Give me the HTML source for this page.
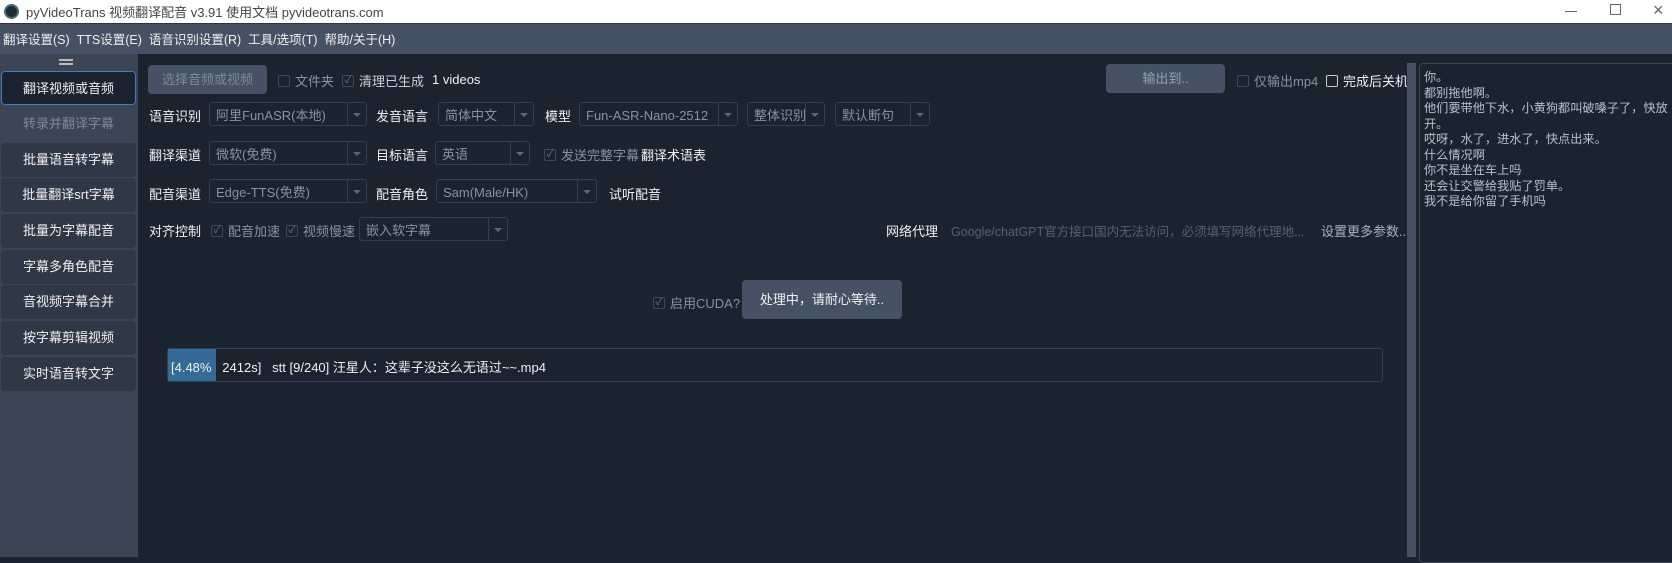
<!DOCTYPE html>
<html><head><meta charset="utf-8"><style>
*{box-sizing:border-box;margin:0;padding:0}
body{width:1672px;height:557px;overflow:hidden;background:#1b232e;font-family:"Liberation Sans","Noto Sans CJK SC",sans-serif;font-size:13px;color:#e8ecef;position:relative}
.a{position:absolute;white-space:nowrap}
#title{left:0;top:0;width:1672px;height:24px;background:#fff;color:#444;font-size:13px;border-bottom:1px solid #333}
#menu{left:0;top:24px;width:1672px;height:30px;background:#465263;color:#f0f0f0;font-size:12.5px}
#side{left:0;top:54px;width:138px;height:503px;background:#3b4553}
.sb{position:absolute;left:1px;width:135px;height:34px;background:#2f3945;border-radius:4px;color:#f0f0f0;text-align:center;line-height:34px;font-size:13px}
.lbl{position:absolute;color:#eef1f4;font-size:13px;white-space:nowrap}
.cb{position:absolute;height:24px;border:1px solid #333f4c;border-radius:3px;color:#8793a3;font-size:13px;line-height:22px;padding-left:6px;padding-top:2px;white-space:nowrap}
.cb:after{content:"";position:absolute;right:18px;top:0;bottom:0;border-left:1px solid #333f4c}
.cb:before{content:"";position:absolute;right:5px;top:10px;border:4px solid transparent;border-top:4px solid #5c6775}
.ck{position:absolute;color:#8793a3;font-size:13px;white-space:nowrap}
.ck i{display:inline-block;width:12px;height:12px;border:1px solid #3e4a58;border-radius:2px;margin-right:5px;vertical-align:middle;position:relative;top:-2px;font-style:normal;font-size:10px;line-height:10px;text-align:center;color:#6f7b8a}
.btn{position:absolute;background:#465263;border-radius:4px;color:#97a2b0;text-align:center;font-size:13px}
</style></head><body>
<div id="title" class="a">
<div class="a" style="left:4px;top:4px;width:15px;height:15px;border-radius:50%;background:#1e2b33;border:2px solid #4a6b7a"></div>
<div class="a" style="left:26px;top:2px">pyVideoTrans 视频翻译配音 v3.91 使用文档 pyvideotrans.com</div>
<div class="a" style="left:1565px;top:11px;width:12px;height:1px;background:#666"></div>
<div class="a" style="left:1610px;top:4px;width:11px;height:11px;border:1px solid #666"></div>
<div class="a" style="left:1653px;top:0px;font-size:18px;color:#666">×</div>
</div>
<div id="menu" class="a"><div class="a" style="left:3px;top:5px">翻译设置(S)&nbsp; TTS设置(E)&nbsp; 语音识别设置(R)&nbsp; 工具/选项(T)&nbsp; 帮助/关于(H)</div></div>
<div id="side" class="a">
<div class="a" style="left:59px;top:5px;width:14px;height:2px;background:#bbb"></div>
<div class="a" style="left:59px;top:9px;width:14px;height:2px;background:#bbb"></div>
<div class="sb" style="top:17px;background:#1b232e;border:1px solid #3a7fbf">翻译视频或音频</div>
<div class="sb" style="top:53px;background:#3b4553;color:#7f8a98">转录并翻译字幕</div>
<div class="sb" style="top:89px">批量语音转字幕</div>
<div class="sb" style="top:124px">批量翻译srt字幕</div>
<div class="sb" style="top:160px">批量为字幕配音</div>
<div class="sb" style="top:196px">字幕多角色配音</div>
<div class="sb" style="top:231px">音视频字幕合并</div>
<div class="sb" style="top:267px">按字幕剪辑视频</div>
<div class="sb" style="top:303px">实时语音转文字</div>
</div>
<div class="btn" style="left:148px;top:65px;width:119px;height:29px;line-height:29px;color:#7f8a98">选择音频或视频</div>
<div class="ck" style="left:278px;top:71px"><i></i>文件夹</div>
<div class="ck" style="left:342px;top:71px"><i>✓</i><span style="color:#c8ced5">清理已生成</span></div>
<div class="lbl" style="left:432px;top:72px">1 videos</div>
<div class="btn" style="left:1106px;top:64px;width:119px;height:29px;line-height:29px">输出到..</div>
<div class="ck" style="left:1237px;top:71px"><i></i>仅输出mp4</div>
<div class="ck" style="left:1326px;top:71px;color:#eef1f4"><i style="border-color:#ccc"></i>完成后关机</div>

<div class="lbl" style="left:149px;top:106px">语音识别</div>
<div class="cb" style="left:209px;top:102px;width:158px">阿里FunASR(本地)</div>
<div class="lbl" style="left:376px;top:106px">发音语言</div>
<div class="cb" style="left:438px;top:102px;width:96px">简体中文</div>
<div class="lbl" style="left:545px;top:106px">模型</div>
<div class="cb" style="left:579px;top:102px;width:159px">Fun-ASR-Nano-2512</div>
<div class="cb" style="left:747px;top:102px;width:78px">整体识别</div>
<div class="cb" style="left:835px;top:102px;width:95px">默认断句</div>

<div class="lbl" style="left:149px;top:145px">翻译渠道</div>
<div class="cb" style="left:209px;top:141px;width:158px">微软(免费)</div>
<div class="lbl" style="left:376px;top:145px">目标语言</div>
<div class="cb" style="left:435px;top:141px;width:95px">英语</div>
<div class="ck" style="left:544px;top:145px"><i>✓</i>发送完整字幕</div>
<div class="lbl" style="left:641px;top:145px">翻译术语表</div>

<div class="lbl" style="left:149px;top:184px">配音渠道</div>
<div class="cb" style="left:209px;top:179px;width:158px">Edge-TTS(免费)</div>
<div class="lbl" style="left:376px;top:184px">配音角色</div>
<div class="cb" style="left:436px;top:179px;width:161px">Sam(Male/HK)</div>
<div class="lbl" style="left:609px;top:184px">试听配音</div>

<div class="lbl" style="left:149px;top:221px">对齐控制</div>
<div class="ck" style="left:211px;top:221px"><i>✓</i>配音加速</div>
<div class="ck" style="left:286px;top:221px"><i>✓</i>视频慢速</div>
<div class="cb" style="left:359px;top:217px;width:149px">嵌入软字幕</div>
<div class="lbl" style="left:886px;top:221px">网络代理</div>
<div class="ck" style="left:951px;top:221px;color:#566170;font-size:12.5px">Google/chatGPT官方接口国内无法访问，必须填写网络代理地...</div>
<div class="ck" style="left:1321px;top:221px;color:#a9b3bf">设置更多参数...</div>

<div class="ck" style="left:653px;top:293px"><i>✓</i>启用CUDA?</div>
<div class="btn" style="left:742px;top:280px;width:160px;height:39px;line-height:39px;color:#eef1f4">处理中，请耐心等待..</div>

<div class="a" style="left:167px;top:348px;width:1216px;height:34px;border:1px solid #34404d;border-radius:3px"></div>
<div class="a" style="left:168px;top:349px;width:48px;height:32px;background:#356a97"></div>
<div class="lbl" style="left:171px;top:357px">[4.48%&nbsp;&nbsp; 2412s]&nbsp;&nbsp; stt [9/240] 汪星人：这辈子没这么无语过~~.mp4</div>

<div class="a" style="left:1407px;top:63px;width:9px;height:494px;background:#465263"></div>
<div class="a" style="left:1419px;top:63px;width:260px;height:500px;border:1px solid #3c4856;border-radius:4px"></div>
<div class="a" style="left:1424px;top:70px;color:#b8c0ca;font-size:12.2px;line-height:15.5px;white-space:normal;width:246px">你。<br>都别拖他啊。<br>他们要带他下水，小黄狗都叫破嗓子了，快放开。<br>哎呀，水了，进水了，快点出来。<br>什么情况啊<br>你不是坐在车上吗<br>还会让交警给我贴了罚单。<br>我不是给你留了手机吗</div>
</body></html>
